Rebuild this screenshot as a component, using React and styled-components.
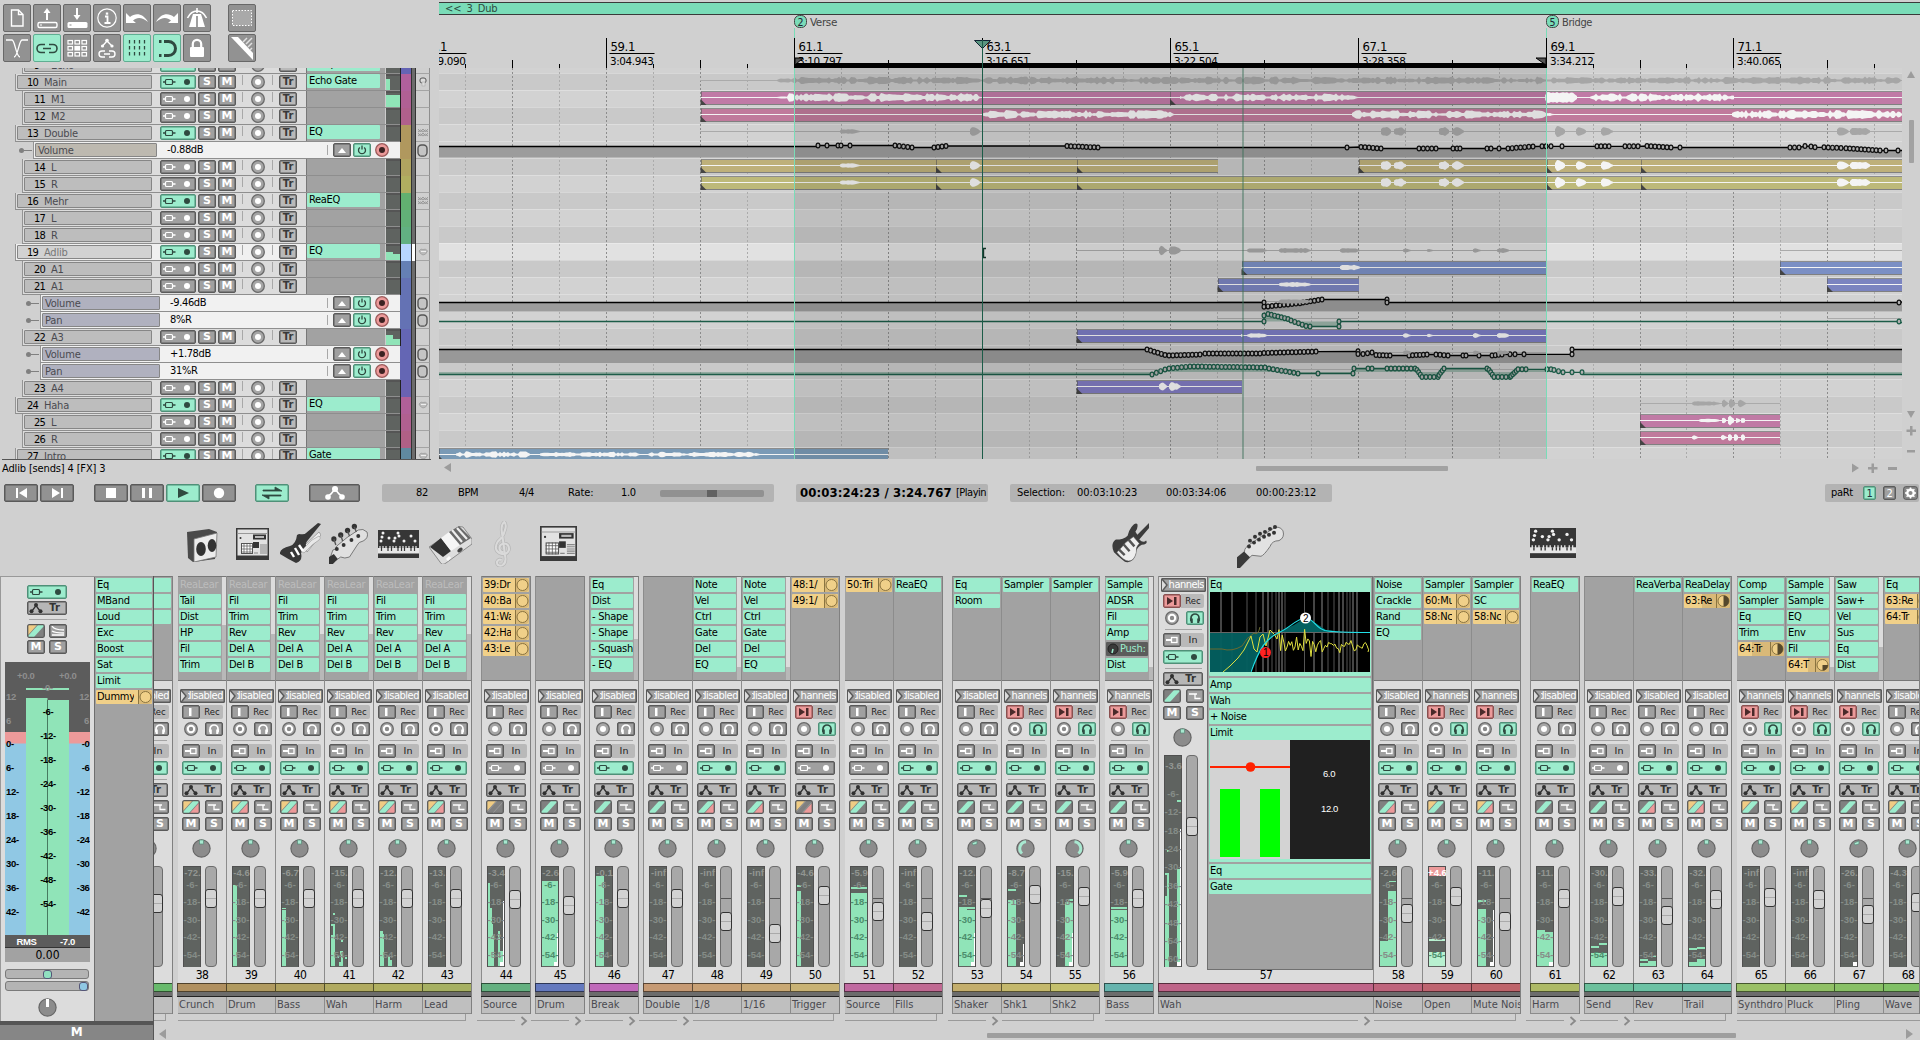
import React from 'react';
import styled, { createGlobalStyle, css } from 'styled-components';

const UI = '"DejaVu Sans Condensed", "DejaVu Sans", "Noto Sans", sans-serif';
const WIDE = '"DejaVu Sans", "Noto Sans", sans-serif';
const ARIAL = '"Liberation Sans", Arial, sans-serif';
const C = {
  bg: '#d0d0d0', mint: '#9ceccd', mintDark: '#4f9078', ink: '#2f4a40', grey: '#a0a0a0', line: '#5a5a5a',
  label: '#b9b9b9', meter: '#5f6360', meterFill: '#90e4b8', orange: '#f0d089', orangeDim: '#d9b978', pink: '#ec9a9a',
};

const Global = createGlobalStyle`
  * { box-sizing: border-box; }
  body { margin: 0; background: ${C.bg}; }
  svg { display: block; flex: none; }
  svg text { white-space: pre; }
`;

/* ---------- shell ---------- */
const Shell = styled.div`
  width: 1920px; height: 1040px; overflow: hidden; background: ${C.bg};
  display: flex; flex-direction: column;
  font: 11px/14px ${UI}; letter-spacing: -0.35px; color: #000; cursor: default;
`;
const TopArea = styled.div`display: flex; height: 484px; flex: none;`;
const LeftPane = styled.div`width: 439px; flex: none; display: flex; flex-direction: column;`;

/* ---------- toolbar ---------- */
const Toolbar = styled.div`
  height: 68px; padding: 4px 0 0 3px; flex: none;
  display: grid; grid-template-columns: repeat(7, 28px) 13px 28px; grid-auto-rows: 28px; gap: 2px;
`;
const ToolButton = styled.div`
  width: 28px; height: 28px; border-radius: 2px; display: flex; align-items: center; justify-content: center;
  border: 1px solid ${p => (p.$on ? '#5fae92' : '#686868')};
  background: ${p => (p.$on ? C.mint : '#929292')};
  grid-column: ${p => (p.$far ? 9 : 'auto')};
`;

function ToolIcon({ k }) {
  const w = '#fff', d = C.ink;
  const s = {
    file: <path d="M7.500 5h7l4.500 4.500V21H7.500zM14.500 5v4.500H19" fill="none" stroke={w} strokeWidth="1.400" />,
    open: <g stroke={w} fill="none"><rect x="4" y="17.500" width="19" height="5" rx="1.500" strokeWidth="1.400" /><path d="M13 15V6" strokeWidth="2" /><path d="M9.500 8l3.500-5 3.500 5z" fill={w} stroke="none" /><path d="M6 20h2" /></g>,
    save: <g><rect x="3.500" y="17" width="20" height="6" rx="1.500" fill={w} /><path d="M5.500 20h2" stroke="#888" /><path d="M13 3v8" stroke={w} strokeWidth="2" /><path d="M9.500 10h7l-3.500 5z" fill={w} /></g>,
    info: <g><circle cx="13" cy="13" r="9.200" fill="none" stroke={w} strokeWidth="1.200" /><path d="M11 11.500h2.500V18M10.500 18h6" stroke={w} strokeWidth="1.800" fill="none" /><rect x="11.800" y="7.500" width="2.400" height="2.200" fill={w} /></g>,
    undo: <path d="M2 8v10h10l-3-2.500c4-3.500 9-3.500 15 1.500C19 8.500 12 7.500 6 12z" fill={w} />,
    redo: <path d="M24 8v10H14l3-2.500c-4-3.500-9-3.500-15 1.500C7 8.500 14 7.500 20 12z" fill={w} />,
    metro: <g><path d="M9 9h8l4 13H5z" fill={w} /><path d="M3.500 13c2.500-5 6-7 9.500-7s7 2 9.500 7" fill="none" stroke={w} strokeWidth="1.600" /><path d="M13 11v11" stroke="#888" strokeWidth="1.600" /><path d="M12.200 3h1.600v5h-1.600z" fill={w} /></g>,
    marquee: <rect x="3.500" y="5.500" width="19" height="15" fill="#a9a9a9" stroke={w} strokeDasharray="1.500 1.500" />,
    xfade: <g stroke={w} fill="none" strokeWidth="1.300"><path d="M2 5h6c3 0 4 17 8 17M24 5h-6c-3 0-4 17-8 17" /></g>,
    link: <g fill="none" stroke={d} strokeWidth="1.600"><path d="M11 9.500H7a4 4 0 0 0 0 8h4M15 9.500h4a4 4 0 0 1 0 8h-4M9 13.500h8" /></g>,
    grid: <g fill="none" stroke={w} strokeWidth="1.200">{[0, 1, 2].map(i => [0, 1, 2].map(j => <rect key={i + '' + j} x={4 + i * 7} y={5.500 + j * 6} width="4.500" height="3.500" fill={i === 1 && j === 1 ? w : 'none'} />))}</g>,
    envlink: <g fill="none" stroke={w} strokeWidth="1.400"><path d="M8.500 11L13 6l4.500 4.500" /><path d="M11 16H8a2.800 2.800 0 0 0 0 6h3M15 16h3a2.800 2.800 0 0 1 0 6h-3M10 19h6" /><g fill={w} stroke="none"><circle cx="8.500" cy="11" r="1.600" /><circle cx="13" cy="5.500" r="1.800" /><circle cx="18" cy="11" r="1.600" /></g></g>,
    bars: <g stroke={d} strokeWidth="1.300" strokeDasharray="3.500 2.500">{[5.500, 10.500, 15.500, 20.500].map(x => <path key={x} d={`M${x} 5v17`} />)}</g>,
    snap: <g fill="none" stroke={d} strokeWidth="3"><path d="M10 6.500h4.500a6.500 6.500 0 0 1 0 14H10" /><path d="M5 6.500h3M5 20.500h3" strokeDasharray="2.500 1.500" /></g>,
    lock: <g><rect x="6" y="12" width="14" height="10" rx="1" fill={w} /><path d="M8.800 12V9a4.200 4.200 0 0 1 8.400 0v3" fill="none" stroke={w} strokeWidth="2.200" /></g>,
    ruler: <g><path d="M2 2h7l15 16v7z" fill={w} /><path d="M14 7l4-4M17 9l6-6M19 12l4-4M21 15l2-2" stroke="#e0e0e0" strokeWidth="1.500" /></g>,
  }[k];
  return <svg width="26" height="26" viewBox="0 0 26 26">{s}</svg>;
}
const TOOLS = [
  ['file'], ['open'], ['save'], ['info'], ['undo'], ['redo'], ['metro'], ['marquee', 0, 1],
  ['xfade'], ['link', 1], ['grid'], ['envlink'], ['bars', 1], ['snap', 1], ['lock'], ['ruler', 0, 1],
];

/* ---------- small shared parts ---------- */
const face = css`
  border: 1px solid ${p => (p.$on ? C.mintDark : C.line)};
  background: ${p => (p.$on ? C.mint : C.grey)};
  box-shadow: inset 0 0 0 0.5px ${p => (p.$on ? C.mintDark : C.line)};
  border-radius: 2px; height: 14px;
`;
const Btn = styled.div`
  ${face}
  width: ${p => p.$w || 18}px; flex: none; display: flex; align-items: center; justify-content: center;
  font: bold ${p => p.$fs || 11}px/12px ${WIDE}; letter-spacing: 0; color: #fff;
`;
const FlatTr = styled(Btn)`background: ${C.label}; color: #383838; font-size: 10px;`;
const ArmBtn = styled(Btn)`
  ${p => p.$armed && `background: ${C.pink}; border-color: #8a5050; box-shadow: inset 0 0 0 0.5px #8a5050;`}
`;
const Divider = styled.div`width: 1px; height: 10px; background: #a8a8a8; flex: none;`;
const Rule = styled.div`height: 1px; background: #a4a4a4; margin: ${p => p.$m};`;

function IoGlyph({ on, w = 34 }) {
  const c = on ? C.ink : '#fff';
  return (
    <svg width={w} height="12" viewBox={`0 0 ${w} 12`}>
      <path d="M2 6h3M12 6h2.500" stroke={c} strokeWidth="1.300" />
      <rect x="4.500" y="3.500" width="7" height="5" rx="1" fill="none" stroke={c} strokeWidth="1.200" />
      <circle cx={w - 8} cy="6" r="3" fill={c} />
    </svg>
  );
}
function RecGlyph({ kind }) {
  const red = kind === 'red';
  return (
    <svg width="14" height="14" viewBox="0 0 14 14">
      <circle cx="7" cy="7" r="6.300" fill={red ? C.pink : '#a6a6a6'} stroke={red ? '#9c5a5a' : '#6a6a6a'} strokeWidth="1.300" />
      {kind === 'ring'
        ? <circle cx="7" cy="7" r="3.200" fill="#8a8a8a" stroke="#fff" strokeWidth="2" />
        : <circle cx="7" cy="7" r="3" fill={red ? '#3c2222' : '#fff'} />}
    </svg>
  );
}
function NodesGlyph() {
  return (
    <svg width="14" height="12" viewBox="0 0 14 12">
      <path d="M3 9L7 3.500 11 9" fill="none" stroke="#303030" strokeWidth="1.300" />
      <g fill="#303030"><circle cx="2.500" cy="9.200" r="2" /><circle cx="7" cy="3" r="2" /><circle cx="11.500" cy="9.200" r="2" /></g>
    </svg>
  );
}

/* ---------- track list ---------- */
const TrackList = styled.div`height: 391px; overflow: hidden; flex: none; width: 431px;`;
const TrackRows = styled.div`margin-top: -11px;`;
const Row = styled.div`display: flex; height: 17px; width: 430px;`;
const Lead = styled.div`width: ${p => p.$w}px; flex: none; display: flex; align-items: center; justify-content: flex-end;`;
const Dot = styled.div`width: 5px; height: 5px; border-radius: 3px; background: #808080;`;
const Stem = styled.div`width: 8px; height: 1px; background: #808080; margin-right: 1px;`;
const RowBody = styled.div`
  flex: 1; display: flex; border-left: 1px solid #949494; border-bottom: 1px solid #8e8e8e;
  background: ${p => p.$bg || '#dcdcdc'};
`;
const NameBox = styled.div`
  height: 14px; margin: 1px 8px 0 1px; border: 1px solid #868686; border-radius: 1px; background: ${p => p.$bg || '#bdbdbd'};
  display: flex; flex: ${p => (p.$w ? 'none' : 1)}; width: ${p => (p.$w ? p.$w + 'px' : 'auto')};
  font-size: 11px; line-height: 13px; letter-spacing: -0.2px; color: ${p => p.$ink || '#4a4a50'}; padding-left: ${p => (p.$w ? 2 : 9)}px;
  white-space: nowrap;
`;
const Num = styled.span`color: #000; width: 17px; flex: none; letter-spacing: -0.7px;`;
const Controls = styled.div`
  width: 146px; flex: none; padding-top: 1px; display: grid; align-items: start; height: 16px;
  grid-template-columns: 38px 20px 24px 9px 21px 7px 27px;
`;
const FxCell = styled.div`
  width: 80px; flex: none; background: #a2a2a2; border-left: 1px solid #777; border-right: 1px solid #ccc; padding: 0 5px 2px 0;
`;
const FxChip = styled.div`background: ${C.mint}; height: 14px; padding-left: 2px; line-height: 14px; border-radius: 1px;`;
const MiniMeter = styled.div`width: 14px; flex: none; background: ${C.meter}; border-top: 2px solid #555; display: flex; align-items: flex-end;`;
const MiniBar = styled.div`width: ${p => p.$w || 7}px; height: ${p => p.$h}px; background: ${C.meterFill};`;
const Swatch = styled.div`width: 12px; flex: none; background: ${p => p.$c}; border-left: ${p => (p.$env ? 0 : 1)}px solid #222; border-right: 1px solid #333;`;
const Gutter = styled.div`width: 4px; flex: none; background: ${p => (p.$light ? '#fff' : '#6c6c6c')}; border-right: 1px solid #333;`;
const IconCell = styled.div`width: 14px; flex: none; background: #cfcfcf; border-right: 1px solid #8e8e8e; border-bottom: 1px solid #a4a4a4; display: flex; align-items: center; justify-content: center;`;
const EnvValue = styled.div`flex: 1; padding-left: 2px; line-height: 16px;`;
const EnvTools = styled.div`display: flex; align-items: center; gap: 2px; width: 73px; flex: none;`;
const EnvPower = styled.div`margin-right: 2px;`;
const EnvArrow = styled.div`margin-left: 3px;`;

const TRACKS = [
  { n: 9, name: 'Echo', io: 1, fx: 'Comp', c: '#6464b4' },
  { n: 10, name: 'Main', top: 1, io: 1, fx: 'Echo Gate', c: '#b0609c', m: [[4, 11]], ic: 'mic' },
  { n: 11, name: 'M1', c: '#b06094', m: [[14, 12]] },
  { n: 12, name: 'M2', c: '#b0608c' },
  { n: 13, name: 'Double', top: 1, io: 1, fx: 'EQ', c: '#b0985e', ic: 'tex' },
  { env: 'Volume', v: '-0.88dB', top: 1, c: '#b0985e', bg: '#bdb9b0' },
  { n: 14, name: 'L', c: '#b0a460' }, { n: 15, name: 'R', c: '#b0ae60' },
  { n: 16, name: 'Mehr', top: 1, io: 1, fx: 'ReaEQ', c: '#62b070', ic: 'tex' },
  { n: 17, name: 'L', c: '#62b078' }, { n: 18, name: 'R', c: '#62b082' },
  { n: 19, name: 'Adlib', top: 1, io: 1, fx: 'EQ', c: '#b8d6ff', sel: 1, m: [[7, 8], [7, 6]], ic: 'lips' },
  { n: 20, name: 'A1', c: '#6580b4' }, { n: 21, name: 'A1', c: '#6472b4' },
  { env: 'Volume', v: '-9.46dB', c: '#6472b4', bg: '#b0b1bf' },
  { env: 'Pan', v: '8%R', c: '#6472b4', bg: '#b0b1bf' },
  { n: 22, name: 'A3', c: '#6466b4', m: [[7, 10], [7, 6]] },
  { env: 'Volume', v: '+1.78dB', c: '#6466b4', bg: '#b0b1bf' },
  { env: 'Pan', v: '31%R', c: '#6466b4', bg: '#b0b1bf' },
  { n: 23, name: 'A4', c: '#6a62b2' },
  { n: 24, name: 'Haha', top: 1, io: 1, fx: 'EQ', c: '#b06098', ic: 'lips' },
  { n: 25, name: 'L', c: '#b06090' }, { n: 26, name: 'R', c: '#b06086' },
  { n: 27, name: 'Intro', top: 1, io: 1, fx: 'Gate', c: '#6089a0', ic: 'lips' },
];

function TinyIcon({ k }) {
  if (k === 'env') return <svg width="11" height="13"><rect x="1" y="1" width="9" height="11" rx="3.500" fill="#c4c4c4" stroke="#555" strokeWidth="1.400" /><path d="M3 11.500h5" stroke="#888" /></svg>;
  if (k === 'mic') return <svg width="8" height="12"><rect x="1" y="2" width="6" height="5" rx="2" fill="#ddd" stroke="#555" /><rect x="3" y="6" width="3" height="4" fill="#ddd" stroke="#aaa" strokeWidth=".6" /></svg>;
  if (k === 'tex') return <svg width="10" height="8"><path d="M0 0l2.500 3L5 0l2.500 3L10 0M0 3l2.500-2L5 3l2.500-2L10 3M0 4l2.500 3L5 4l2.500 3L10 4M0 7l2.500-2L5 7l2.500-2L10 7" stroke="#8c8c8c" fill="none" strokeWidth=".8" /></svg>;
  if (k === 'lips') return <svg width="10" height="8"><path d="M1 3q2-3 4-1.500Q8 0 9.500 3 8 7 5 7 2 6 1 3z" fill="#bbb" stroke="#999" strokeWidth=".7" /><path d="M3 3.500h5" stroke="#eee" /></svg>;
  return null;
}

function Track({ t }) {
  if (t.env) {
    return (
      <Row>
        <Lead $w={t.top ? 33 : 40}><Dot /><Stem /></Lead>
        <RowBody $bg="#f1f1f1">
          <NameBox $w={t.top ? 122 : 118} $bg={t.bg}>{t.env}</NameBox>
          <EnvValue>{t.v}</EnvValue>
          <EnvTools>
            <Divider />
            <EnvArrow><Btn><svg width="10" height="6"><path d="M1 6l4-5 4 5z" fill="#fff" /></svg></Btn></EnvArrow>
            <EnvPower><Btn $on><svg width="12" height="12"><path d="M3.800 3.500a3.500 3.500 0 1 0 4.400 0M6 1.500v4" stroke={C.ink} strokeWidth="1.300" fill="none" /></svg></Btn></EnvPower>
            <RecGlyph kind="red" />
          </EnvTools>
        </RowBody>
        <Swatch $c={t.c} $env /><Gutter /><IconCell><TinyIcon k="env" /></IconCell>
      </Row>
    );
  }
  return (
    <Row>
      <Lead $w={t.top ? 15 : 22} />
      <RowBody $bg={t.sel ? '#f0f0f0' : undefined}>
        <NameBox $bg={t.sel ? '#d2d2d2' : undefined} $ink={t.sel ? '#777' : undefined}><Num>{t.n}</Num>{t.name}</NameBox>
        <Controls>
          <Btn $w={36} $on={t.io}><IoGlyph on={t.io} /></Btn>
          <Btn>S</Btn><Btn>M</Btn><Divider /><RecGlyph /><Divider />
          <FlatTr>Tr</FlatTr>
        </Controls>
        <FxCell>{t.fx && <FxChip>{t.fx}</FxChip>}</FxCell>
        <MiniMeter>{(t.m || []).map(([w, h], i) => <MiniBar key={i} $w={w} $h={h} />)}</MiniMeter>
      </RowBody>
      <Swatch $c={t.c} /><Gutter $light={t.sel} /><IconCell><TinyIcon k={t.ic} /></IconCell>
    </Row>
  );
}
const Status = styled.div`
  margin-left: 2px; width: 429px; height: 18px; border-top: 1px solid #555; line-height: 17px; letter-spacing: -0.15px; flex: none;
`;

/* ---------- arrangement ---------- */
const X0 = 439, LW = 1463;
const Arrange = styled.div`flex: 1; display: flex; flex-direction: column; min-width: 0; overflow: hidden;`;
const RegionBar = styled.div`
  margin-top: 2px; height: 13px; background: #7adcb8; border-top: 1px solid #3a3a3a; border-bottom: 1px solid #3a3a3a;
  padding-left: 6px; line-height: 12px; color: #2c4a40; word-spacing: 2px; flex: none; letter-spacing: -0.1px;
`;
const Ruler = styled.div`height: 53px; flex: none;`;
const LaneWrap = styled.div`height: 391px; display: flex; flex: none;`;
const LaneArea = styled.div`width: ${LW}px; height: 391px; position: relative; overflow: hidden; flex: none;`;
const Lanes = styled.div`margin-top: -12px;`;
const Lane = styled.div`
  height: 17px; background: ${p => p.$bg}; border-top: 1px solid rgba(255,255,255,.28); position: relative;
`;
const Clip = styled.div`
  position: absolute; z-index: 1; top: 0; height: 14px; left: ${p => p.$x - X0}px; width: ${p => p.$w}px;
  background: ${p => p.$c}; border-top: 1px solid #8d8d8d; border-bottom: 1px solid #808080; border-left: 1px solid rgba(90,90,90,.6);
`;
const Layer = styled.svg`position: absolute; inset: 0; z-index: ${p => p.$z};`;
const VScroll = styled.div`width: 18px; display: flex; flex-direction: column; align-items: center;`;
const VThumb = styled.div`width: 5px; height: 43px; background: #a2a2a2; margin: 42px 0 0 1px; border-radius: 1px;`;
const VButtons = styled.svg`margin-top: 248px;`;
const HScroll = styled.div`height: 16px; margin-top: 1px; display: flex; align-items: center;`;
const HThumb = styled.div`width: 192px; height: 5px; background: #a2a2a2; border-radius: 1px; margin: 0 402px 0 803px;`;

const CLIPS = {
  2: [[700.5, 1170, '#c07aa6'], [1170, 1902, '#c07aa6']],
  3: [[700.5, 1902, '#c07a9c']],
  6: [[700.5, 936, '#beb07a'], [936, 1077, '#beb07a'], [1077, 1217.5, '#beb07a'], [1358.5, 1546.5, '#beb07a'], [1546.5, 1641, '#beb07a'], [1641, 1902, '#beb07a']],
  7: [[700.5, 936, '#bdb97a'], [936, 1077, '#bdb97a'], [1077, 1546.5, '#bdb97a'], [1546.5, 1641, '#bdb97a'], [1641, 1902, '#bdb97a']],
  12: [[1241.5, 1546, '#7b8fc4'], [1780, 1902, '#7b8fc4']],
  13: [[1217.5, 1358.5, '#7b84c0'], [1827, 1902, '#7b84c0']],
  16: [[1076.5, 1546, '#7b7cc2']],
  19: [[1076.5, 1241.5, '#807ac0']],
  21: [[1640, 1780, '#c07aa5']],
  22: [[1640, 1780, '#c07a9c']],
  23: [[439, 888, '#7a9ab6']],
};
const FOLDER_LINES = { 1: [[700, 1902]], 4: [[700, 1902]], 11: [[1076, 1546], [1780, 1902]], 20: [[1640, 1780]], 14: [[1217, 1358]], 15: [[1217, 1358], [1827, 1902]], 17: [[1076, 1546]], 18: [[1076, 1546]] };
const spots = [[840, 860, 2.2], [970, 980, 5], [1381, 1392, 5], [1394, 1407, 4], [1439, 1450, 4.5], [1452, 1464, 4], [1555, 1566, 5], [1576, 1587, 4], [1601, 1613, 4], [1837, 1849, 4], [1850, 1871, 3.6]];
const adlib = [[1159, 1167, 4.5], [1169, 1181, 4], [1247, 1268, 2], [1279, 1311, 2.2], [1340, 1360, 2.4], [1403, 1412, 2], [1427, 1433, 2], [1473, 1481, 2.4], [1497, 1510, 2.4]];
const WAVES = {
  1: [[777, 1902, 4]],
  2: [[777, 981, 4.6], [1180, 1358, 4], [1545, 1578, 5], [1590, 1735, 4.4]],
  3: [[982, 1174, 4.6], [1352, 1554, 4.4], [1732, 1902, 4.6]],
  4: spots, 6: spots, 7: spots,
  11: adlib,
  12: [[1340, 1361, 2.6]], 13: [[1279, 1311, 2.2]], 14: [[1279, 1311, 2]],
  16: [[1241, 1244, 3], [1247, 1268, 2], [1403, 1412, 2], [1427, 1433, 2], [1473, 1481, 2.4], [1497, 1510, 2.4]],
  17: [[1403, 1412, 2], [1473, 1481, 2], [1497, 1510, 2]],
  19: [[1159, 1167, 4.5], [1169, 1181, 4]],
  20: [[1692, 1720, 2], [1722, 1728, 5], [1729, 1736, 5], [1738, 1746, 4]],
  21: [[1699, 1720, 1.8], [1722, 1727, 5], [1728, 1735, 6], [1736, 1740, 5], [1741, 1746, 5]],
  22: [[1692, 1699, 2], [1721, 1727, 3], [1728, 1733, 5], [1734, 1739, 5], [1741, 1746, 5]],
  23: [[456, 530, 3.4], [540, 640, 3], [648, 760, 3]],
};
const GREY_ROWS = new Set(['1', '4', '11', '14', '17', '20']);

function wavePath(x0, x1, amp, cy, seed) {
  let s = seed * 7919 + 13;
  const rnd = () => { s = (s * 16807) % 2147483647; return s / 2147483647; };
  const short = x1 - x0 < 40;
  const pts = [];
  let h = amp * 0.5;
  for (let x = x0; x <= x1; x += 2) {
    const r = rnd();
    if (short) h = amp * (0.75 + 0.35 * r);
    else h = r < 0.2 ? amp * (0.2 + rnd() * 0.3) : r < 0.65 ? amp * (0.5 + rnd() * 0.5) : h * 0.95;
    const edge = short ? Math.min(1, (x - x0 + 2) / 4, (x1 - x + 1) / 6) : Math.min(1, (x - x0 + 2) / 5, (x1 - x + 1) / 5);
    pts.push([x, Math.max(0.6, h * edge)]);
  }
  return 'M' + pts.map(([x, a]) => `${x} ${(cy - a).toFixed(1)}`).join('L') + 'L'
    + pts.reverse().map(([x, a]) => `${x} ${(cy + a).toFixed(1)}`).join('L') + 'Z';
}

const run = (a, b, y0, y1, step = 4) => {
  const o = [];
  const n = Math.max(1, Math.round((b - a) / step));
  for (let i = 0; i <= n; i++) o.push([a + (b - a) * i / n, y0 + (y1 - y0) * i / n, 1]);
  return o;
};
const pt = (...xs) => y => xs.map(x => [x, y, 1]);
const ENVS = [
  { base: 157.5, c: '#000', fill: '#9c9c9c', p: [[439, 146.5], [817, 146.5], ...pt(818, 827, 838, 841, 850)(145.5), ...run(895, 912, 145.5, 147.5), ...run(934, 946, 147.5, 146), ...run(1067, 1098, 146, 147.5), ...pt(1347)(147.5), ...run(1361, 1381, 147, 148.5), ...run(1419, 1436, 148.5, 148.5), ...pt(1453, 1457, 1460)(148.5), ...pt(1487, 1491, 1499)(148.5), ...run(1508, 1533, 148.5, 146.5), ...pt(1542, 1546, 1551, 1562)(146.3), ...run(1597, 1609, 146.3, 146.3), ...run(1625, 1638, 146.3, 146.3), ...run(1647, 1671, 146, 147.5), ...pt(1680)(147.5), ...run(1790, 1799, 147.5, 147.5), ...pt(1805)(146), ...run(1811, 1815, 146.5, 147.3), ...run(1824, 1841, 147.3, 148), ...run(1846, 1880, 148.3, 150.5), ...pt(1886, 1898)(150.5), [1902, 150.5]] },
  { base: 311.6, c: '#000', fill: '#9c9c9c', p: [[439, 302.5], ...pt(1264)(302.5), ...run(1264, 1300, 306.8, 303.2), ...run(1303, 1322, 302.5, 299.5), ...pt(1387)(299.5), ...pt(1387)(302.5), ...pt(1899)(302.5), [1902, 302]] },
  { base: 321.5, c: '#1c5c48', fill: 'rgba(70,130,105,.4)', p: [[439, 321.5], ...pt(1264)(321.5), ...pt(1264)(315.6), ...run(1268, 1288, 314, 319, 3.500), ...run(1291, 1306, 320.5, 326, 3.500), ...pt(1310)(326.5), ...pt(1339)(326.5), ...pt(1339)(321.5), ...pt(1899)(321.5), [1902, 323]] },
  { base: 363, c: '#000', fill: '#989898', p: [[439, 349.5], ...run(1147, 1165, 349.5, 355), ...run(1169, 1200, 355.5, 354.5), ...run(1205, 1260, 353.5, 353.5), ...run(1264, 1316, 353, 351.6), ...pt(1358)(351.3), ...pt(1358)(354), ...run(1363, 1372, 354, 352.5), ...run(1376, 1390, 355, 355.5), ...run(1409, 1427, 355.5, 354.5), ...run(1436, 1448, 354.5, 355.5), ...pt(1463, 1466, 1479)(355.5), ...run(1492, 1502, 355.5, 354.5), ...pt(1510, 1515, 1524)(354.3), ...pt(1572)(354.3), ...pt(1572)(349.5), [1902, 349.5]] },
  { base: 372, c: '#1c5c48', fill: 'rgba(70,130,105,.4)', p: [[439, 374.5], ...run(1152, 1165, 374.5, 369.5), ...run(1169, 1190, 368.5, 366.5), ...run(1194, 1265, 366.5, 367.5), ...run(1269, 1298, 368.5, 373.5), ...pt(1318)(373.5), ...pt(1353)(373.5), ...pt(1354, 1368, 1372)(368.5), ...run(1387, 1415, 368.5, 368.5), ...run(1417, 1422, 370, 377, 2), ...run(1426, 1438, 377, 377), ...run(1439, 1444, 375, 368.5, 2), ...pt(1487)(368.5), ...run(1489, 1494, 370, 377, 2), ...run(1498, 1510, 377, 377), ...run(1511, 1518, 376, 369.3, 2), ...pt(1522, 1526)(369.3), ...pt(1547, 1551)(369.3), ...run(1554, 1563, 370, 372.3), ...pt(1572, 1582)(372.3), [1583, 374.5], [1902, 374.5]] },
];
const laneY = i => 57 + 17 * i;

const RULER_TICKS = Array.from({ length: 32 }, (_, i) => Math.floor(418.8 + 46.97 * i) + 0.5);
const LANE_TICKS = RULER_TICKS.map((x, i) => [x, i]).filter(([x]) => x > 439 && x < 1902);
const RULER_LABELS = [[418.5, '57.1', '2:59.090'], [606.5, '59.1', '3:04.943'], [794.5, '61.1', '3:10.797'], [982.5, '63.1', '3:16.651'], [1170.5, '65.1', '3:22.504'], [1358.5, '67.1', '3:28.358'], [1546.5, '69.1', '3:34.212'], [1733.5, '71.1', '3:40.065']];

function Arrangement() {
  const bgs = [];
  let alt = 1;
  TRACKS.forEach((t) => { if (!t.env) alt = 1 - alt; bgs.push(t.sel ? '#e1e1e1' : alt ? '#c9c9c9' : '#d2d2d2'); });
  return (
    <Arrange>
      <RegionBar>&lt;&lt; 3 Dub</RegionBar>
      <Ruler>
        <svg width="1481" height="53" viewBox="439 15 1481 53" fontFamily={UI}>
          {[[795, '2', 'Verse', 27], [1547, '5', 'Bridge', 30]].map(([x, n, l, tl]) => (
            <g key={n}>
              <rect x={x - 0.500} y="15.500" width="12" height="12" rx="5" fill="#7adcb8" stroke="#444" />
              <text x={x + 2.500} y="25.500" fontSize="10.500" fill="#223">{n}</text>
              <text x={x + 15} y="26" fontSize="11" fill="#444" textLength={tl} lengthAdjust="spacingAndGlyphs">{l}</text>
              <path d={`M${x - 0.500} 28V68`} stroke="#7adcb8" />
            </g>
          ))}
          {LANE_TICKS.map(([x, i]) => <path key={x} d={`M${x} ${i % 4 === 0 ? 38 : i % 2 === 0 ? 60 : 64}V68`} stroke="#000" />)}
          {RULER_LABELS.map(([x, a, b]) => (
            <g key={a}>
              <text x={x + 4} y="50.500" fontSize="12" textLength="24.500" lengthAdjust="spacingAndGlyphs">{a}</text>
              <path d={`M${x + 3} 53.500h45`} stroke="#000" />
              <text x={x + 3.500} y="65" fontSize="11" textLength="43.500" lengthAdjust="spacingAndGlyphs">{b}</text>
            </g>
          ))}
          <path d="M794.500 63H1546.500V68H794.500z" fill="#000" />
          <path d="M795 58h8l-8 7zM1546 58h-10l10 7z" fill="#555" stroke="#000" />
          <path d="M974.500 40.500h16l-8 8z" fill="#5a9680" stroke="#123" />
          <path d="M982.500 40v28" stroke="#1c5c48" />
        </svg>
      </Ruler>
      <LaneWrap>
        <LaneArea>
          <Lanes>
            {TRACKS.map((t, i) => (
              <Lane key={i} $bg={bgs[i]}>
                {(CLIPS[i] || []).map(([a, b, c]) => <Clip key={a} $x={a} $w={b - a} $c={c} />)}
              </Lane>
            ))}
          </Lanes>
          <Layer $z={0} width={LW} height="391" viewBox={`439 68 ${LW} 391`}>
            {LANE_TICKS.map(([x, i]) => <path key={x} d={`M${x} 68V459`} stroke={i % 2 ? '#ababab' : '#8c8c8c'} strokeDasharray="2 2" />)}
          </Layer>
          <Layer $z={2} width={LW} height="391" viewBox={`439 68 ${LW} 391`}>
            {Object.entries(FOLDER_LINES).map(([i, l]) => l.map(([a, b]) => <path key={i + a} d={`M${a} ${laneY(+i) + 6.500}H${b}`} stroke="#aaa" />))}
            {Object.entries(CLIPS).map(([i, l]) => l.map(([a, b]) => (
              <g key={i + a}>
                <path d={`M${a} ${laneY(+i) + 6.500}H${b}`} stroke="#f4f4f4" strokeWidth="1.200" />
                <path d={`M${a} ${laneY(+i) + 8}v6h6z`} fill="#444" />
              </g>
            )))}
            {ENVS.map((e, i) => {
              const d = e.p.map(([x, y]) => `${x.toFixed(1)} ${y.toFixed(1)}`).join('L');
              return (
                <g key={i}>
                  <path d={`M439 ${e.base}L${d}L1902 ${e.base}Z`} fill={e.fill} />
                  <path d={`M${d}`} fill="none" stroke={e.c} strokeWidth="1.300" />
                  {e.p.filter(p => p[2]).map(([x, y], k) => <ellipse key={k} cx={x} cy={y} rx="1.900" ry="2.400" fill="#b0b0b0" stroke={e.c === '#000' ? '#111' : e.c} strokeWidth="1.200" />)}
                </g>
              );
            })}
            {Object.entries(WAVES).map(([i, l]) => l.map(([a, b, amp], k) => (
              <path key={i + a} d={wavePath(a, b, amp, laneY(+i) + 6.500, (i === '6' || i === '7' ? 4 : +i) + k * 3)} fill={GREY_ROWS.has(i) ? '#a6a6a6' : '#f4f4f4'} />
            )))}
            <path d="M794.500 68H1546.500V459H794.500z" fill="#000" opacity=".09" />
            <path d="M794.500 68V459M1546.500 68V459" stroke="#7adcb8" />
            <path d="M1243 68V459" stroke="#3a7058" strokeWidth="1.600" opacity=".55" />
            <path d="M982.500 68V459" stroke="#1c5c48" strokeWidth="1" />
            <path d="M986 248.500h-2.500v9h2.500" stroke="#14352a" strokeWidth="1.400" fill="none" />
          </Layer>
        </LaneArea>
        <VScroll>
          <svg width="12" height="10"><path d="M2 10l4-7 4 7z" fill="#9c9c9c" /></svg>
          <VThumb />
          <VButtons width="12" height="48"><path d="M2 0h8l-4 7zM5 15h2.500v3.500H11V21H7.500v3.500H5V21H1.500v-2.500H5zM2 39h8v2.500H2z" fill="#9c9c9c" /></VButtons>
        </VScroll>
      </LaneWrap>
      <HScroll>
        <svg width="14" height="10"><path d="M12 0v9L5 4.500z" fill="#9c9c9c" /></svg>
        <HThumb />
        <svg width="62" height="12"><path d="M2 1.500v9l7-4.500zM21.500 1.500H24v3.500h3.500v2.500H24V11h-2.500V7.500H18V5h3.500zM38 5h9v3h-9z" fill="#9c9c9c" /></svg>
      </HScroll>
    </Arrange>
  );
}

/* ---------- transport ---------- */
const Transport = styled.div`height: 18px; flex: none; display: flex; padding-left: 4px;`;
const TButton = styled.div`
  ${face}
  height: 18px; width: ${p => p.$w || 34}px; margin-right: ${p => p.$gap ?? 2}px; flex: none;
  background: ${p => (p.$on ? C.mint : '#929292')}; display: flex; align-items: center; justify-content: center;
`;
const Panel = styled.div`
  height: 18px; background: #b3b3b3; border-radius: 2px; width: ${p => p.$w}px; margin-left: ${p => p.$ml}px; flex: none;
  display: flex; align-items: center; overflow: hidden; white-space: nowrap;
`;
const Field = styled.span`width: ${p => p.$w}px; flex: none; letter-spacing: ${p => p.$ls ?? -0.35}px; overflow: hidden;`;
const BigTime = styled.span`font-weight: bold; font-size: 13px; letter-spacing: 0.1px; margin-left: 4px; width: 156px; flex: none;`;
const RateTrack = styled.div`width: 104px; height: 7px; border-radius: 2px; background: #919191; display: flex; justify-content: center;`;
const RateKnob = styled.div`width: 10px; height: 7px; background: #626262;`;
const ChipNum = styled.div`
  ${face}
  width: 13px; height: 14px; margin-right: 7px; text-align: center; font-size: 11px; line-height: 13px; color: ${p => (p.$on ? '#234' : '#fff')};
`;

const TRANSPORT = [
  [34, 2, 0, <path key="a" d="M7 3h2v10H7zM18 3v10l-8-5z" fill="#fff" />],
  [34, 20, 0, <path key="a" d="M16 3h2v10h-2zM7 3v10l8-5z" fill="#fff" />],
  [34, 2, 0, <path key="a" d="M7 3h10v10H7z" fill="#fff" />],
  [34, 2, 0, <path key="a" d="M7 3h3v10H7zM14 3h3v10h-3z" fill="#fff" />],
  [34, 2, 1, <path key="a" d="M7 3v10l11-5z" fill={C.ink} />],
  [34, 19, 0, <circle key="a" cx="12" cy="8" r="5.200" fill="#fff" />],
  [34, 20, 1, <path key="a" d="M3 5h12V2l7 4H3zM21 11H9v3L2 10h19z" fill={C.ink} stroke={C.ink} strokeWidth=".8" />],
  [51, 0, 0, <g key="a"><path d="M4 12l4-3 4-5 4 5 4 3" fill="none" stroke="#fff" strokeWidth="1.700" /><circle cx="12" cy="4" r="3" fill="#fff" /><circle cx="5" cy="12" r="2.800" fill="#fff" /><circle cx="19" cy="12" r="2.800" fill="#fff" /></g>],
];

/* ---------- mixer ---------- */
const IconShelf = styled.div`height: 74px; flex: none; display: flex; align-items: flex-start; padding-top: 18px;`;
const ShelfSlot = styled.div`margin-left: ${p => p.$ml}px; padding-top: ${p => p.$pt}px; flex: none;`;
const MixerBody = styled.div`display: flex; height: 464px; flex: none;`;

function Instrument({ k, w, h }) {
  const art = {
    amp: <g><path d="M0 3L22 0l8 3-2 27L6 33 1 29z" fill="#4a4a4a" /><path d="M7 10l23-6-1 24L7 33z" fill="#ececec" stroke="#777" strokeWidth=".8" /><ellipse cx="14" cy="20" rx="4.800" ry="7" fill="#333" /><ellipse cx="25" cy="16.500" rx="4.300" ry="6.500" fill="#333" /></g>,
    mpc: <g><rect width="33" height="32" fill="#3a3a3a" /><rect x="1.500" y="1.500" width="30" height="26" fill="#e2e2e2" /><path d="M1.500 5.500h30" stroke="#999" /><rect x="17" y="6.500" width="13" height="5" fill="#333" /><rect x="19" y="8" width="9" height="2" fill="#bbb" /><rect x="5.500" y="15.500" width="11" height="10" fill="#fff" stroke="#555" /><path d="M8 15v11M11 15v11M14 15v11M5 18h12M5 21h12M5 24h12" stroke="#555" strokeWidth=".7" /><rect x="17" y="14" width="6" height="6" fill="#333" /><path d="M24 17h7M24 19h7M24 21h7M24 23h7M24 25h7M18 25h4" stroke="#888" /><circle cx="4.500" cy="10" r="1" fill="#333" /></g>,
    guitar: <g><path d="M25 22L39 9l2 3-14 17z" fill="#eee" stroke="#777" strokeWidth=".6" /><path d="M19 11q6 1 7-1L38 0l3 1-13 16q-3 3-2 6l-5 7q2 8-5 10Q8 36 0 31q-1-5 10-8 6-2 7-11z" fill="#373737" /><path d="M32 17l7-4q3 2 0 4l-7 5-8 8-3-2z" fill="#e8e8e8" stroke="#888" strokeWidth=".5" /><path d="M11 29l3 5M15 25l4 7M19 22l4 6" stroke="#fff" strokeWidth="2.400" /></g>,
    head: <g><path d="M4 27q4 0 4-4 10-9 22-16 5-2 9 2 2 6-4 9-5 1-6 4-4 6-8 12-5 2-9 0L3 40 0 38z" fill="#e0e0e0" stroke="#777" /><path d="M0 34l5-3 4 5-5 5H0z" fill="#333" /><g fill="#333"><circle cx="5" cy="16" r="2.700" /><circle cx="12" cy="12" r="2.700" /><circle cx="19" cy="7.500" r="2.700" /><circle cx="26" cy="3.500" r="2.700" /><circle cx="8" cy="26" r="2" /><circle cx="15" cy="22" r="2" /><circle cx="23" cy="17" r="2" /><circle cx="30" cy="13" r="2" /></g><path d="M5 16l2 6M12 12l2 6M19 8l2 5M26 4l2 5" stroke="#555" strokeWidth="1.400" /></g>,
    synth: <g><rect width="41" height="28" fill="#363636" /><rect y="18" width="41" height="5.500" fill="#e6e6e6" /><path d="M2 16v5M5 16v5M8 16v5M12 16v5M15 16v5M18 16v5M22 16v5M25 16v5M28 16v5M31 16v5M35 16v5M38 16v5" stroke="#e6e6e6" strokeWidth="1.200" /><path d="M3.500 18v3M10 18v3M13.500 18v3M20 18v3M23.500 18v3M26.500 18v3M33 18v3M36.500 18v3" stroke="#363636" strokeWidth="1.200" /><g fill="#f0f0f0">{[[5, 3], [4, 7], [3, 11], [11, 8], [16, 11], [17, 8], [21, 6], [26, 11], [33, 6], [37, 11], [20, 3]].map(([x, y]) => <circle key={x + y * 50} cx={x} cy={y} r="1.500" />)}</g></g>,
    pedal: <g><path d="M0 21L27 3q3-4 7-2l9 12v5L17 37q-4 3-6-1z" fill="#dedede" stroke="#777" strokeWidth=".8" /><path d="M1 21L12 12l10 13-8 6z" fill="#333" /><path d="M12 12l8-6 11 13-9 6z" fill="#f6f6f6" /><path d="M20 6l10-6 12 12-11 7z" fill="#6a6a6a" /><path d="M23 4l10 12M28 2l10 11" stroke="#eee" strokeWidth="2.200" /><ellipse cx="31" cy="24" rx="3" ry="1.800" fill="#444" transform="rotate(-35 31 24)" /><path d="M17 33l3-3 2 2-3 3z" fill="#fff" /></g>,
    clef: <g fill="none" stroke="#b2b2b2" strokeWidth="1.200"><path d="M10 44q-7 2-7-3 2-4 5-2M9 44q4-2 3-8L8 8q0-6 3-8 3 3 0 10-1 5-7 10-5 8 2 12 8 3 10-4 0-6-6-6-5 1-4 6 1 3 4 3" stroke="#b6b6b6" strokeWidth="3.600" /><path d="M10 44q-7 2-7-3 2-4 5-2M9 44q4-2 3-8L8 8q0-6 3-8 3 3 0 10-1 5-7 10-5 8 2 12 8 3 10-4 0-6-6-6-5 1-4 6 1 3 4 3" stroke="#dadada" strokeWidth="2.200" /></g>,
    strat: <g><path d="M20 4q4-5 6-3 1 4-2 8l2 3L38 0v5L28 17q4 4 7 1 2 3-2 4-5 0-8 6-1 11-8 12-3 1-6-2Q5 33 2 30q-4-9 2-13 8 0 12-4 1-5 4-9z" fill="#3c3c3c" /><path d="M14 20l8-6 6 7q-4 4-3 9-2 9-8 9-5 0-12-9 6-6 9-10z" fill="#eee" stroke="#666" strokeWidth=".6" /><path d="M12 22l6 7M17 17l6 7M7 27l6 6" stroke="#555" strokeWidth="2.500" /></g>,
    strathead: <g><path d="M8 30q-2-5 3-9L34 5q8-6 12 1 2 7-4 10-7 0-9 6-6 9-9 10l-9-1L3 43H0V34z" fill="#e2e2e2" stroke="#777" /><path d="M0 33l7-6 6 6-10 11H0z" fill="#3a3a3a" /><g fill="#333">{[[13, 16], [18, 12], [23, 9], [28, 7], [33, 4], [38, 2], [12, 22], [17, 18], [22, 15], [27, 12], [32, 10], [37, 8]].map(([x, y]) => <circle key={x} cx={x} cy={y} r="2" />)}</g></g>,
  }[k];
  const box = { amp: '0 0 31 33', mpc: '0 0 33 32', guitar: '0 0 41 40', head: '0 0 41 41', synth: '0 0 41 28', pedal: '0 0 43 38', clef: '0 -1 18 47', strat: '0 0 39 41', strathead: '0 0 48 45' }[k];
  return <svg width={w} height={h} viewBox={box} preserveAspectRatio="none">{art}</svg>;
}
const SHELF = [
  ['amp', 187, 9, 31, 33], ['mpc', 236, 8, 33, 32], ['guitar', 280, 3, 41, 40], ['head', 329, 3, 40, 41], ['synth', 378, 10, 41, 28], ['pedal', 429, 6, 43, 38],
  ['clef', 494, 1, 17, 46], ['mpc', 540, 6, 37, 35], ['strat', 1112, 3, 38, 40], ['strathead', 1237, 5, 48, 44], ['synth', 1530, 8, 46, 30],
];

/* master */
const Master = styled.div`width: 154px; flex: none; display: flex; flex-direction: column; border-right: 1px solid #555;`;
const MasterTop = styled.div`height: 447px; display: flex; border-top: 1px solid #999; border-left: 1px solid #999;`;
const MasterLeft = styled.div`width: 93px; background: #dcdcdc; padding: 8px 0 0 4px; flex: none;`;
const MasterButtons = styled.div`width: 40px; margin-left: 22px; display: flex; flex-direction: column;`;
const BtnRow = styled.div`display: flex; justify-content: space-between; align-items: center; margin-bottom: ${p => p.$mb ?? 2}px; height: 14px;`;
const MasterFx = styled.div`flex: 1; background: #a2a2a2; border-left: 1px solid #6e6e6e; padding: 1px 1px 0 1px; display: flex; flex-direction: column; gap: 2px;`;
const Readout = styled.div`width: 85px; height: 14px; background: #a2a2a2; text-align: center; font-size: 12px; line-height: 14px; margin-bottom: 7px; letter-spacing: 0;`;
const Slider = styled.div`
  width: 84px; height: 10px; border: 1px solid #7a7a7a; background: #b4b4b4; border-radius: 3px; margin: 0 0 2px 0; display: flex;
  justify-content: ${p => p.$at};
`;
const SliderKnob = styled.div`width: 9px; height: 9px; margin-top: -0.5px; border: 1px solid #557; border-radius: 3px; background: ${p => p.$c};`;
const MasterFoot = styled.div`flex: 1; background: #868686; border-top: 4px solid #555; color: #fff; text-align: center; font: bold 12px/15px ${WIDE};`;

/* slots */
const Slot = styled.div`
  height: 14px; flex: none; width: ${p => p.$w || 46}px; border-radius: 1px; overflow: hidden; white-space: nowrap; display: flex;
  font-size: 11px; line-height: 14px; padding-left: 1px; letter-spacing: -0.25px;
  background: ${p => ({ fx: C.mint, off: '#a2a2a2', param: '#5c5c5c' }[p.$k] || C.orange)};
  color: ${p => ({ off: '#bcbcbc', param: C.mint }[p.$k] || '#000')};
  ${p => p.$part && `background: linear-gradient(90deg, ${C.orange} ${p.$part}%, ${C.orangeDim} ${p.$part}%);`}
`;
const SlotText = styled.span`flex: 1; overflow: hidden; min-width: 0;`;
const SendKnob = styled.span`width: 14px; flex: none; background: ${C.orangeDim}; border-left: 1px solid #8a7440; margin-left: 4px; border-radius: 0 4px 4px 0;`;

function FxSlot({ s, w }) {
  if (s[0] === '@') {
    const [, text, level, part] = s.split('|');
    return (
      <Slot $k="send" $w={w} $part={part}>
        <SlotText>{text}</SlotText>
        <SendKnob>
          <svg width="13" height="14"><circle cx="6.500" cy="7" r="5.500" fill={C.orange} stroke="#8a7440" />
            {level === 'q' && <path d="M6.500 7h5.500a5.500 5.500 0 0 1-5.500 5.500z" fill="#55482c" />}
            {level === 'h' && <path d="M6.500 1.500a5.500 5.500 0 0 1 0 11z" fill="#55482c" />}
          </svg>
        </SendKnob>
      </Slot>
    );
  }
  if (s[0] === '~') return <Slot $k="off" $w={w}><SlotText>{s.slice(1)}</SlotText></Slot>;
  if (s[0] === '%') return <Slot $k="param" $w={w}><svg width="13" height="14"><circle cx="6" cy="7" r="5" fill="#3a3a3a" stroke="#222" /><path d="M6 7l-1 4" stroke={C.mint} strokeWidth="1.500" /></svg><SlotText>{s.slice(1)}</SlotText></Slot>;
  return <Slot $k="fx" $w={w}><SlotText>{s}</SlotText></Slot>;
}

/* channel strips */
const Strips = styled.div`display: flex; height: 438px; overflow: hidden; width: 1766px;`;
const Group = styled.div`
  display: flex; flex: none; margin-left: ${p => p.$ml}px; border-right: 1px solid #808080;
  width: ${p => (p.$clip ? p.$clip + 'px' : 'auto')}; overflow: hidden; justify-content: ${p => (p.$clip && p.$ml === 0 ? 'flex-end' : 'flex-start')};
`;
const StripBox = styled.div`
  width: ${p => p.$w || 49}px; flex: none; border-left: 1px solid ${p => (p.$open ? 'transparent' : '#8c8c8c')}; display: flex; flex-direction: column; background: #dcdcdc;
  background-clip: padding-box;
`;
const FxList = styled.div`
  height: 105px; flex: none; background: #a2a2a2; border-top: 1px solid #777; border-bottom: 1px solid #777; padding: 1px 0 0 1px; display: flex;
`;
const FxCol = styled.div`display: flex; flex-direction: column; gap: 2px; flex: 1; min-width: 0;`;
const FxScroll = styled.div`
  width: 4px; margin-top: -1px; margin-left: 1px; background: linear-gradient(#dcdcdc ${p => p.$h}px, #b8b8b8 ${p => p.$h}px);
`;
const Cluster = styled.div`padding: ${p => p.$pt}px 0 0 0; display: flex; flex-direction: column; width: 48px;`;
const InputBox = styled.div`
  height: 14px; margin: 0 1px 2px 2px; border: 1px solid ${C.line}; box-shadow: inset 0 0 0 0.5px ${C.line}; border-radius: 1px; background: #a2a2a2; color: #fff;
  display: flex; justify-content: flex-end; overflow: hidden; line-height: 12px; font-size: 11px; letter-spacing: -0.5px; padding-right: 1px;
`;
const InputNotch = styled.svg`margin: 0 0 0 -1px;`;
const InputText = styled.span`flex: 1; min-width: 0; display: flex; justify-content: flex-end; overflow: hidden;`;
const Line = styled.div`display: flex; height: 14px; margin: 0 3px ${p => p.$mb}px 4px; justify-content: space-between; flex: none;`;
const Tag = styled.div`flex: 1; background: ${C.label}; border-radius: 0 2px 2px 0; font: ${p => p.$fs || 8.5}px/14px ${WIDE}; letter-spacing: 0; color: #222; text-align: center; padding-left: 1px;`;
const TrBtn = styled(Btn)`background: #b6b6b6; justify-content: space-between; padding: 0 6px 0 1px; color: #333; font-size: 10px;`;
const KnobWrap = styled.div`display: flex; justify-content: center; margin: 8px 0 8px -1px;`;
const MeterRow = styled.div`display: flex; padding-left: 5px; gap: 4px; height: ${p => p.$h}px;`;
const FaderTrack = styled.div`
  width: 12px; height: 100%; background: #a8a8a8; border: 1px solid #6c6c6c; border-radius: 4px; padding-top: ${p => p.$y - 1}px;
  position: relative;
`;
const ZeroMark = styled.div`position: absolute; left: 0; right: 0; top: ${p => p.$t}px; height: 1px; background: #555;`;
const FaderCap = styled.div`
  width: 12px; height: 19px; margin-left: -1px; background: #d2d2d2; border: 1px solid #333; border-radius: 3px; padding-top: 8px; position: relative;
  &::after { content: ''; display: block; height: 1px; background: #aaa; }
`;
const NumLabel = styled.div`height: 16px; line-height: 17px; font-size: 12px; text-align: center; letter-spacing: -0.5px; flex: none;`;
const ColorBar = styled.div`height: 9px; margin-left: -1px; background: ${p => p.$c}; border: 1px solid rgba(0,0,0,.55); border-right: 0; flex: none;`;
const Under = styled.div`height: 5px; margin-left: -1px; background: #6c6c6c; border-bottom: 1px solid #222; flex: none;`;
const NameLabel = styled.div`
  height: 17px; background: #bfbfbf; border-bottom: 1px solid #8c8c8c; padding-left: 1px; line-height: 16px; font-size: 11px; letter-spacing: 0; color: #4a4a50;
  overflow: hidden; white-space: nowrap; flex: none;
`;

function PhaseGlyph({ k }) {
  const [a, b, c] = k;
  return (
    <svg width="18" height="14" viewBox="0 0 18 14">
      <rect x=".7" y=".7" width="16.600" height="12.600" rx="1.500" fill="#808080" />
      {a === 'y' && <path d="M1 1h9L1 11z" fill="#f0cc84" />}
      {c === 'r' && <path d="M17 3v10H8z" fill={C.pink} />}
      {b === 'm' ? <path d="M11 1h6v1L7 13H1v-1z" fill={C.mint} /> : <path d="M11 1L1 12M17 2L7 13" stroke="#999" />}
      <rect x=".7" y=".7" width="16.600" height="12.600" rx="1.500" fill="none" stroke="#5a5a5a" strokeWidth="1.300" />
    </svg>
  );
}
function PanKnob({ v }) {
  const arc = { L: 'M10 2.700A6.800 6.800 0 0 0 6 14.500', R: 'M9.500 2.700A6.800 6.800 0 0 1 13.500 14.500' };
  return (
    <svg width="19" height="19" viewBox="0 0 19 19">
      <circle cx="9.500" cy="9.500" r="8.600" fill="#8c8c8c" stroke="#666" strokeWidth="1.200" />
      {v === 'L' || v === 'R' ? <path d={arc[v]} stroke="#a8e8d0" strokeWidth="3" fill="none" /> : v === 'l'
        ? <path d="M5 4l5-2v3l-4 1z" fill="#a8e8d0" stroke="#5a8a78" strokeWidth=".7" />
        : v === 'w' ? <path d="M9.500 1v8" stroke="#fff" strokeWidth="3" />
          : <rect x="7.500" y="1" width="4" height="4" fill="#a8e8d0" stroke="#5a8a78" strokeWidth=".7" />}
    </svg>
  );
}
function Meter({ peak, bars = [], h = 101, clip }) {
  const tall = h > 110;
  const labels = tall
    ? ['-6-', '-12-', '-18-', '-24-', '-30-', '-36-', '-42-', '-48-', '-54-', '-60-'].map((t, i) => [t, 38.5 + i * 18.4])
    : [['-6-', 19], ['-18-', 36], ['-30-', 54], ['-42-', 71], ['-54-', 89]];
  return (
    <svg width="18" height={h} viewBox={`0 0 18 ${h}`}>
      <rect width="18" height={h} fill={C.meter} />
      <path d={`M.5 0V${h}M17.500 0V${h}M0 .5H18`} stroke="#505050" />
      {clip && <rect x="1" y="1" width="16" height="9" fill={C.pink} />}
      {bars.map(([x, y, w, hh, c], i) => <rect key={i} x={x} y={y} width={w} height={hh} fill={c || C.meterFill} />)}
      <g fontFamily={ARIAL} fontWeight="bold" fontSize="9.500" letterSpacing="0" textAnchor="middle">
        <text x="9.500" y={tall ? 13.5 : 10} fill={clip ? '#fff' : '#929692'}>{peak}</text>
        {labels.map(([t, y]) => {
          const lit = bars.some(b => b[0] < 4 && b[2] > 12 && b[3] > 5 && b[1] <= y && b[1] + b[3] >= y);
          return <text key={t} x="9" y={y + 3.300} fill={lit ? '#4c8c6c' : '#868d88'}>{t}</text>;
        })}
      </g>
    </svg>
  );
}

function ChannelControls({ c, pt: top, meterH = 101 }) {
  const armed = c.armed;
  return (
    <Cluster $pt={top}>
      <InputBox>
        <InputNotch width="8" height="13"><path d="M0 0h1.500l5 6-5 6.500H0z" fill="#dcdcdc" /><path d="M1 0l5 6-5 6.500" stroke={C.line} fill="none" strokeWidth="1.500" /></InputNotch>
        <InputText>{armed ? 'channels' : 'disabled'}</InputText>
      </InputBox>
      <Line $mb={3}>
        <ArmBtn $armed={armed}>
          {armed
            ? <svg width="14" height="10"><path d="M2 1v8l6-4zM9 1h2.500v8H9z" fill="#4a2a2a" /></svg>
            : <svg width="4" height="8"><path d="M0 0h2.500v8H0z" fill="#fff" /></svg>}
        </ArmBtn>
        <Tag>Rec</Tag>
      </Line>
      <Line $mb={4}>
        <svg width="18" height="14"><g transform="translate(2 0)"><RecGlyph kind={c.ring ? 'ring' : 'dot'} /></g></svg>
        <Btn $on={armed}>
          <svg width="14" height="12"><path d="M3 9V6a4 4 0 0 1 8 0v3" fill="none" stroke={armed ? C.ink : '#fff'} strokeWidth="1.700" /><path d="M1.800 6.500h3v4.500h-2zM12.200 6.500h-3v4.500h2z" fill={armed ? C.ink : '#fff'} /></svg>
        </Btn>
      </Line>
      <Rule $m="0 5px 3px 6px" />
      <Line $mb={3}>
        <Btn><svg width="14" height="10"><path d="M1 5h5" stroke="#fff" strokeWidth="2" /><rect x="6.500" y="2.500" width="5.500" height="5" fill="none" stroke="#fff" strokeWidth="1.300" /></svg></Btn>
        <Tag $fs={9.5}>In</Tag>
      </Line>
      <Line $mb={4}><Btn $w={40} $on={!c.noio}><IoGlyph on={!c.noio} w={38} /></Btn></Line>
      <Rule $m="0 5px 3px 6px" />
      <Line $mb={3}><TrBtn $w={40}><NodesGlyph />Tr</TrBtn></Line>
      <Line $mb={3}>
        <PhaseGlyph k={c.ph} />
        <Btn><svg width="14" height="10"><path d="M1 3h6v4.500h5.500M7 3h2" stroke="#fff" strokeWidth="1.300" fill="none" /></svg></Btn>
      </Line>
      <Line $mb={0}><Btn>M</Btn><Btn>S</Btn></Line>
      <KnobWrap><PanKnob v={c.pan} /></KnobWrap>
      <MeterRow $h={meterH}>
        <Meter peak={c.pk} bars={c.bars} h={meterH} clip={c.clip} />
        <FaderTrack $y={c.f}>
          {meterH < 110 && c.f > 32 && <ZeroMark $t={31} />}
          <FaderCap />
        </FaderTrack>
      </MeterRow>
    </Cluster>
  );
}
function StripFoot({ c }) {
  return (
    <>
      <NumLabel>{c.n}</NumLabel>
      <ColorBar $c={c.c} /><Under /><NameLabel>{c.name}</NameLabel>
    </>
  );
}
function Strip({ c, open }) {
  return (
    <StripBox $open={open}>
      <FxList>
        <FxCol>{(c.fx || []).map((s, i) => <FxSlot key={i} s={s} w={c.sc ? 42 : 46} />)}</FxCol>
        {c.sc && <FxScroll $h={c.sc} />}
      </FxList>
      <ChannelControls c={c} pt={8} />
      <StripFoot c={c} />
    </StripBox>
  );
}

/* embedded effect panels of the wide strip */
const WideTop = styled.div`display: flex; height: 391px; flex: none; border-top: 1px solid #777;`;
const Embed = styled.div`width: 166px; height: 393px; background: #a2a2a2; border: 1px solid #707070; border-top: 0; padding: 1px; display: flex; flex-direction: column; gap: 2px; position: relative;`;
const EmbedFx = styled.div`background: ${C.mint}; height: ${p => p.$h || 14}px; padding: 0 1px; line-height: 14px; flex: none; border-radius: 1px;`;
const spectrum = (() => {
  let s = 4242;
  const r = () => { s = (s * 16807) % 2147483647; return s / 2147483647; };
  const o = ['13 80', '20 74', '28 66', '34 58', '38 50', '41 44', '44 57', '47 60', '50 45', '53 42', '56 54', '60 38', '64 42', '67 47'];
  for (let x = 69; x < 160; x += 1.6) {
    const mid = x < 100 ? 48 : x < 130 ? 54 : x < 142 ? 50 : 55;
    o.push(`${x.toFixed(1)} ${(mid + (r() - 0.5) * (x < 105 ? 22 : x < 130 ? 14 : 9)).toFixed(1)}`);
  }
  o.push('158 60');
  return 'M' + o.join('L');
})();

function EqGraph() {
  return (
    <svg width="160" height="80" viewBox="0 0 160 80">
      <rect width="160" height="80" fill="#000" />
      {[11, 22, 37, 46, 53, 58, 62, 66, 69, 72, 75, 94.5, 104, 112, 118, 124, 129, 133, 137, 140, 143, 147].map((x, i) => <path key={x} d={`M${x} 0V80`} stroke={i % 4 < 2 ? '#8a8a8a' : '#555'} />)}
      <path d="M0 41H64L50 58 40 80H0z" fill="#036060" opacity=".95" />
      <path d="M66 41L84 33 95 26 104 30 116 38 140 41z" fill="#036060" />
      <path d="M0 40.500H160" stroke="#666" />
      <path d="M0 57h12q10 3 20-3 4-8 12-13 4 3 6-6" fill="none" stroke="#6a6a30" />
      <path d={spectrum} fill="none" stroke="#e0e040" />
      <path d="M41 80C50 55 56 47 68 41 80 36 86 27 95 26c9 0 10 10 20 12.500 10 2 20 2 45 2" fill="none" stroke="#20e0e8" strokeWidth="1.200" />
      <circle cx="95.500" cy="26" r="5.500" fill="#fff" /><circle cx="55.500" cy="60.500" r="5.500" fill="#f22" />
      <g fontFamily={ARIAL} fontSize="10" textAnchor="middle" fill="#000"><text x="95.500" y="29.500">2</text><text x="55.500" y="64">1</text></g>
    </svg>
  );
}
function LimitGraph() {
  return (
    <svg width="160" height="119" viewBox="0 0 160 119">
      <rect width="80" height="119" fill="#d3d3d3" /><rect x="80" width="80" height="119" fill="#202020" />
      <path d="M0 27H80" stroke="#f20" strokeWidth="2" /><circle cx="40.500" cy="27" r="4.800" fill="#f20" />
      <rect x="10" y="49" width="20" height="68" fill="#0f0" /><rect x="50" y="49" width="20" height="68" fill="#0f0" />
      <g fontFamily={ARIAL} fontSize="9.500" fill="#fff" textAnchor="middle"><text x="119" y="37">6.0</text><text x="119.500" y="72">12.0</text></g>
    </svg>
  );
}
function WideStrip({ c }) {
  return (
    <StripBox $w={215}>
      <WideTop>
        <ChannelControls c={c} pt={1} meterH={212} />
        <Embed>
          <EmbedFx $h={98}>Eq<EqGraph /></EmbedFx>
          <EmbedFx>Amp</EmbedFx><EmbedFx>Wah</EmbedFx><EmbedFx>+ Noise</EmbedFx>
          <EmbedFx $h={136}>Limit<LimitGraph /></EmbedFx>
          <EmbedFx>Eq</EmbedFx><EmbedFx>Gate</EmbedFx>
        </Embed>
      </WideTop>
      <StripFoot c={c} />
    </StripBox>
  );
}

const W = '#fff';
const dels = ['~ReaLear', 'Fil', 'Trim', 'Rev', 'Del A', 'Del B'];
const GROUPS = [
  { ml: 0, clip: 19, s: [{ n: '', name: '', c: '#68ba6c', fx: ['', '', ''], ph: '-m-', pk: '', f: 28 }] },
  { ml: 4, open: 1, s: [
    { n: 38, name: 'Crunch', c: '#b09060', fx: ['~ReaLear', 'Tail', 'Dist', 'HP', 'Fil', 'Trim'], sc: 48, ph: 'ymr', pk: '-72.', f: 23, ring: 1 },
    { n: 39, name: 'Drum', c: '#b09a60', fx: dels, sc: 57, ph: 'ymr', pk: '-4.6', f: 23, ring: 1, bars: [[1, 19, 4, 81]] },
    { n: 40, name: 'Bass', c: '#b0a260', fx: dels, sc: 57, ph: 'ymr', pk: '-6.7', f: 23, ring: 1, bars: [[1, 44, 4, 56], [1, 42, 4, 1]] },
    { n: 41, name: 'Wah', c: '#b0aa60', fx: dels, sc: 57, ph: 'ymr', pk: '-15.', f: 23, ring: 1, bars: [[3, 47, 2, 2], [1, 58, 4, 2], [3, 58, 2, 42], [1, 69, 3, 31], [11, 74, 2, 2], [10, 85, 3, 4], [7, 90, 2, 2], [15, 91, 2, 2], [11, 89, 2, 11], [9, 96, 4, 4]] },
    { n: 42, name: 'Harm', c: '#b0b060', fx: dels, sc: 57, ph: 'ymr', pk: '-12.', f: 23, ring: 1, bars: [[1, 65, 3, 35], [3, 68, 2, 32], [9, 90, 2, 10], [11, 94, 2, 6]] },
    { n: 43, name: 'Lead', c: '#a6b062', fx: dels, sc: 57, ph: 'ymr', pk: '-13.', f: 23, ring: 1 }] },
  { ml: 9, s: [{ n: 44, name: 'Source', c: '#64b080', fx: ['@|39:Dr', '@|40:Ba', '@|41:Wa', '@|42:Ha', '@|43:Le'], ph: 'y--', pk: '-3.4', f: 24, noio: 1, bars: [[1, 17, 2, 83], [3, 42, 2, 58], [5, 58, 1, 42], [6, 70, 1, 30], [11, 65, 2, 35], [12, 85, 4, 12], [16, 35, 1, 62, W], [13, 96, 4, 4, W]] }] },
  { ml: 4, s: [{ n: 45, name: 'Drum', c: '#6479be', fx: [], ph: '-m-', pk: '-2.6', f: 30, noio: 1, bars: [[1, 15, 16, 85], [16, 67, 1, 30, W], [13, 96, 4, 4, W]] }] },
  { ml: 4, s: [{ n: 46, name: 'Break', c: '#c069ba', fx: ['Eq', 'Dist', '- Shape', '- Shape', '- Squash', '- EQ'], sc: 62, ph: '-m-', pk: '-0.1', f: 23, bars: [[1, 10, 8, 90]] }] },
  { ml: 4, s: [
    { n: 47, name: 'Double', c: '#c69a74', fx: [], ph: '-m-', pk: '-inf', f: 23, noio: 1 },
    { n: 48, name: '1/8', c: '#c8a074', fx: ['Note', 'Vel', 'Ctrl', 'Gate', 'Del', 'EQ'], sc: 90, ph: '-mr', pk: '-inf', f: 46 },
    { n: 49, name: '1/16', c: '#c8a874', fx: ['Note', 'Vel', 'Ctrl', 'Gate', 'Del', 'EQ'], sc: 90, ph: '-mr', pk: '-inf', f: 58 },
    { n: 50, name: 'Trigger', c: '#c8b274', fx: ['@|48:1/', '@|49:1/'], ph: 'y-r', pk: '-4.6', f: 20, armed: 1, noio: 1, bars: [[1, 19, 4, 2], [1, 25, 4, 75]] }] },
  { ml: 4, open: 1, s: [
    { n: 51, name: 'Source', c: '#c069a0', fx: ['@|50:Tri'], ph: 'ym-', pk: '-5.9', f: 36, noio: 1, bars: [[1, 21, 16, 2], [1, 27, 16, 73]] },
    { n: 52, name: 'Fills', c: '#c06992', fx: ['ReaEQ'], ph: '-m-', pk: '-inf', f: 46 }] },
  { ml: 9, s: [
    { n: 53, name: 'Shaker', c: '#c4ae6c', fx: ['Eq', 'Room'], ph: '-m-', pk: '-12.', f: 33, pan: 'l', bars: [[1, 29, 8, 2], [1, 41, 16, 59], [9, 43, 8, 1, '#5f6360'], [16, 67, 1, 30, W], [13, 96, 4, 4, W]] },
    { n: 54, name: 'Shk1', c: '#c4b86c', fx: ['Sampler'], ph: '-m-', pk: '-8.7', f: 19, pan: 'L', armed: 1, ring: 1, bars: [[1, 23, 8, 2], [1, 34, 8, 66], [16, 78, 1, 20, W], [13, 96, 4, 4, W]] },
    { n: 55, name: 'Shk2', c: '#c4c06c', fx: ['Sampler'], ph: '-m-', pk: '-15.', f: 21, pan: 'R', armed: 1, ring: 1, bars: [[9, 36, 8, 64], [12, 33, 5, 2], [16, 67, 1, 30, W], [13, 96, 4, 4, W]] }] },
  { ml: 4, open: 1, s: [{ n: 56, name: 'Bass', c: '#66b4ae', fx: ['Sample', 'ADSR', 'Fil', 'Amp', '%Push:', 'Dist'], sc: 90, ph: '-m-', pk: '-5.9', f: 23, armed: 1, bars: [[1, 41, 16, 59], [1, 43, 16, 1, '#5f6360']] }] },
  { ml: 4, s: [
    { wide: 1, n: 57, name: 'Wah', c: '#be6488', ph: '-m-', pk: '-3.6', f: 62, armed: 1, ring: 1, bars: [[13, 45, 4, 2], [3, 95, 2, 2], [1, 118, 4, 2], [3, 118, 2, 94], [1, 141, 2, 71], [13, 114, 3, 97], [16, 74, 1, 135, W], [13, 207, 4, 4, W]] },
    { n: 58, name: 'Noise', c: '#be647c', fx: ['Noise', 'Crackle', 'Rand', 'EQ'], ph: '-mr', pk: '-2.6', f: 38, bars: [[9, 25, 8, 75], [1, 75, 8, 25], [10, 15, 7, 1]] },
    { n: 59, name: 'Open', c: '#be6470', fx: ['Sampler', '@|60:Mu', '@|58:Nc'], ph: 'ym-', pk: '+4.6', f: 21, clip: 1, armed: 1, ring: 1, bars: [[1, 73, 16, 2, '#b8f0d0'], [1, 86, 16, 14, '#b8f0d0']] },
    { n: 60, name: 'Mute Nois', c: '#be646a', fx: ['Sampler', 'SC', '@|58:Nc'], ph: 'ymr', pk: '-11.', f: 46, armed: 1, ring: 1, bars: [[1, 34, 8, 2], [1, 43, 8, 57], [16, 44, 1, 54, W], [13, 96, 4, 4, W]] }] },
  { ml: 9, s: [{ n: 61, name: 'Harm', c: '#aeba66', fx: ['ReaEQ'], ph: '-m-', pk: '-11.', f: 23, bars: [[1, 64, 8, 36], [9, 66, 8, 34], [13, 96, 4, 4, W]] }] },
  { ml: 4, s: [
    { n: 62, name: 'Send', c: '#6cc09c', fx: [], ph: '-m-', pk: '-30.', f: 21, noio: 1, bars: [[1, 80, 8, 2], [9, 77, 8, 2], [1, 87, 16, 13]] },
    { n: 63, name: 'Rev', c: '#6cc2a4', fx: ['ReaVerba'], ph: '-mr', pk: '-33.', f: 40, bars: [[1, 93, 8, 2], [9, 90, 8, 1], [1, 97, 8, 3], [9, 95, 8, 5]] },
    { n: 64, name: 'Trail', c: '#6cc2ac', fx: ['ReaDelay', '@|63:Re|h|40'], ph: 'ymr', pk: '-32.', f: 24, bars: [[1, 82, 8, 2], [9, 81, 8, 2], [9, 93, 8, 7], [1, 96, 8, 4]] }] },
  { ml: 4, open: 1, clip: 184, s: [
    { n: 65, name: 'Synthdro', c: '#9ac066', fx: ['Comp', 'Sampler', 'Eq', 'Trim', '@|64:Tr|h|30'], ph: 'ym-', pk: '-inf', f: 22, armed: 1, ring: 1 },
    { n: 66, name: 'Pluck', c: '#90c066', fx: ['Sample', 'Sample', 'EQ', 'Env', 'Fil', '@|64:T|q|50'], sc: 90, ph: 'ym-', pk: '-inf', f: 24, armed: 1, ring: 1 },
    { n: 67, name: 'Pling', c: '#88c066', fx: ['Saw', 'Saw+', 'Vel', 'Sus', 'Eq', 'Dist'], sc: 70, ph: '-m-', pk: '-26.', f: 39, pan: 'l', armed: 1, ring: 1, bars: [[13, 96, 4, 4, W]] },
    { n: 68, name: 'Wave', c: '#80c066', fx: ['Eq', '@|63:Re', '@|64:Tr'], ph: 'ym-', pk: '-4.3', f: 27 }] },
];

const TrailRow = styled.div`display: flex; height: 13px; flex: none; width: 1766px; overflow: hidden;`;
const Trail = styled.div`
  margin-left: ${p => p.$ml}px; width: ${p => p.$w}px; height: 7px; border-bottom: 1px solid #9a9a9a; flex: none;
  border-right: ${p => (p.$end ? '1px solid #9a9a9a' : 0)};
`;
const TRAILS = [[154, 166, 1], [178, 466, 1], [477, 515], [531, 569], [585, 623], [639, 677], [693, 834, 1], [845, 937, 1], [948, 986], [1002, 1094, 1], [1105, 1358], [1374, 1516, 1], [1526, 1564], [1580, 1618], [1634, 1726, 1], [1737, 1920]];
const MixerRight = styled.div`flex: 1; min-width: 0; display: flex; flex-direction: column;`;
const MixScroll = styled.div`height: 13px; display: flex; align-items: center; padding-left: 4px;`;
const MixThumb = styled.div`width: 749px; height: 5px; background: #9e9e9e; margin: 4px 168px 0 819px; flex: none; border-radius: 1px;`;
const ArrowGap = styled.div`width: 8px; margin-left: 5px; flex: none; padding-top: 2px;`;

function MasterMeter() {
  return (
    <svg width="85" height="286" viewBox="5 662 85 286">
      <rect x="5" y="662" width="85" height="286" fill="#5c5c5c" />
      <path d="M5 743h85v192H5z" fill="#90c8e4" /><path d="M5 732h85v11.500H5z" fill={C.pink} />
      <path d="M26 700h43v235H26z" fill={C.meterFill} /><path d="M26 688h43v2H26zM26 698h21.500v4H26z" fill={C.meterFill} />
      <path d="M47.500 700v235" stroke="#477a60" /><path d="M5 947.500h85" stroke="#333" />
      <g fontFamily={ARIAL} fontWeight="bold" fontSize="9.500">
        <g fill="#8e8e8e"><text x="17" y="679">+0.0</text><text x="59" y="679">+0.0</text><text x="6" y="699.500">12</text><text x="89" y="699.500" textAnchor="end">12</text><text x="6" y="723.500">6</text><text x="89" y="723.500" textAnchor="end">6</text><text x="47.500" y="690.500" textAnchor="middle">-0-</text></g>
        {[6, 12, 18, 24, 30, 36, 42, 48, 54].map((v, i) => <text key={v} x="48" y={715 + i * 24} textAnchor="middle">{`-${v}-`}</text>)}
        {[0, 6, 12, 18, 24, 30, 36, 42].map((v, i) => (
          <g key={v}><text x="6" y={747 + i * 24}>{v}-</text><text x="89.500" y={747 + i * 24} textAnchor="end">-{v}</text></g>
        ))}
        <g fill="#fff"><text x="16.500" y="945">RMS</text><text x="60" y="945">-7.0</text></g>
      </g>
    </svg>
  );
}
const MeterHolder = styled.div`margin-top: 8px;`;
const CenterRow = styled.div`display: flex; justify-content: center; width: 85px; margin-top: 7px;`;

export default function App() {
  return (
    <>
      <Global />
      <Shell>
        <TopArea>
          <LeftPane>
            <Toolbar>{TOOLS.map(([k, on, far]) => <ToolButton key={k} $on={on} $far={far}><ToolIcon k={k} /></ToolButton>)}</Toolbar>
            <TrackList><TrackRows>{TRACKS.map((t, i) => <Track key={i} t={t} />)}</TrackRows></TrackList>
            <Status>Adlib [sends] 4 [FX] 3</Status>
          </LeftPane>
          <Arrangement />
        </TopArea>

        <Transport>
          {TRANSPORT.map(([w, gap, on, g], i) => <TButton key={i} $w={w} $gap={gap} $on={on}><svg width="24" height="16" viewBox="0 0 24 16">{g}</svg></TButton>)}
          <Panel $w={392} $ml={22}>
            <Field $w={34} /><Field $w={42}>82</Field><Field $w={61}>BPM</Field><Field $w={49}>4/4</Field>
            <Field $w={53} $ls={-0.1}>Rate:</Field><Field $w={39}>1.0</Field>
            <RateTrack><RateKnob /></RateTrack>
          </Panel>
          <Panel $w={192} $ml={22}><BigTime>00:03:24:23 / 3:24.767</BigTime><Field $w={31} $ls={-0.5}>[Playin</Field></Panel>
          <Panel $w={322} $ml={22}>
            <Field $w={7} /><Field $w={60} $ls={-0.1}>Selection:</Field><Field $w={89} $ls={0}>00:03:10:23</Field><Field $w={90} $ls={0}>00:03:34:06</Field><Field $w={70} $ls={0}>00:00:23:12</Field>
          </Panel>
          <Panel $w={94} $ml={493}>
            <Field $w={6} /><Field $w={32}>paRt</Field><ChipNum $on>1</ChipNum><ChipNum>2</ChipNum>
            <svg width="15" height="14" viewBox="0 0 15 14"><rect x=".7" y=".7" width="13.600" height="12.600" rx="2" fill="#888" stroke="#555" /><circle cx="7.500" cy="7" r="3.300" fill="none" stroke="#fff" strokeWidth="2.200" /><path d="M7.500 1.500v11M2 7h11M3.600 3.200l7.800 7.600M11.400 3.200l-7.800 7.600" stroke="#fff" strokeWidth="1.500" /><circle cx="7.500" cy="7" r="2" fill="#888" /></svg>
          </Panel>
        </Transport>

        <IconShelf>
          {SHELF.map(([k, x, y, w, h], i) => (
            <ShelfSlot key={i} $ml={i ? x - SHELF[i - 1][1] - SHELF[i - 1][3] : x} $pt={y}><Instrument k={k} w={w} h={h} /></ShelfSlot>
          ))}
        </IconShelf>

        <MixerBody>
          <Master>
            <MasterTop>
              <MasterLeft>
                <MasterButtons>
                  <BtnRow><Btn $w={40} $on><IoGlyph on w={38} /></Btn></BtnRow>
                  <BtnRow $mb={4}><TrBtn $w={40}><NodesGlyph />Tr</TrBtn></BtnRow>
                  <Rule $m="0 0 4px 2px" />
                  <BtnRow><PhaseGlyph k="ym-" /><Btn><svg width="14" height="10"><path d="M1 0q2 4 12 4M1 9h12M1 5q3 2 12 2" stroke="#fff" strokeWidth="1.300" fill="none" /></svg></Btn></BtnRow>
                  <BtnRow $mb={0}><Btn>M</Btn><Btn>S</Btn></BtnRow>
                </MasterButtons>
                <MeterHolder><MasterMeter /></MeterHolder>
                <Readout>0.00</Readout>
                <Slider $at="center"><SliderKnob $c="#90e0c0" /></Slider>
                <Slider $at="flex-end"><SliderKnob $c="#90c8e4" /></Slider>
                <CenterRow><PanKnob v="w" /></CenterRow>
              </MasterLeft>
              <MasterFx>
                {['Eq', 'MBand', 'Loud', 'Exc', 'Boost', 'Sat', 'Limit', '@|Dummy'].map(s => <FxSlot key={s} s={s} w={56} />)}
              </MasterFx>
            </MasterTop>
            <MasterFoot>M</MasterFoot>
          </Master>
          <MixerRight>
            <Strips>
              {GROUPS.map((g, i) => (
                <Group key={i} $ml={g.ml} $clip={g.clip}>
                  {g.s.map((c, j) => (c.wide ? <WideStrip key={j} c={c} /> : <Strip key={j} c={c} open={g.open && j === 0} />))}
                </Group>
              ))}
            </Strips>
            <TrailRow>
              {TRAILS.map(([a, b, end], i) => {
                const prev = i ? TRAILS[i - 1] : [0, 154, 1];
                const arrow = i > 0 && !prev[2];
                return (
                  <React.Fragment key={a}>
                    {arrow && <ArrowGap><svg width="8" height="10"><path d="M1.500 1l4.500 4-4.500 4" fill="none" stroke="#8a8a8a" strokeWidth="1.800" /></svg></ArrowGap>}
                    <Trail $ml={a - prev[1] - (arrow ? 13 : 0)} $w={b - a} $end={end} />
                  </React.Fragment>
                );
              })}
            </TrailRow>
            <MixScroll>
              <svg width="10" height="10"><path d="M8 0v10L1 5z" fill="#9c9c9c" /></svg>
              <MixThumb />
              <svg width="10" height="10"><path d="M2 0v10l7-5z" fill="#9c9c9c" /></svg>
            </MixScroll>
          </MixerRight>
        </MixerBody>
      </Shell>
    </>
  );
}
